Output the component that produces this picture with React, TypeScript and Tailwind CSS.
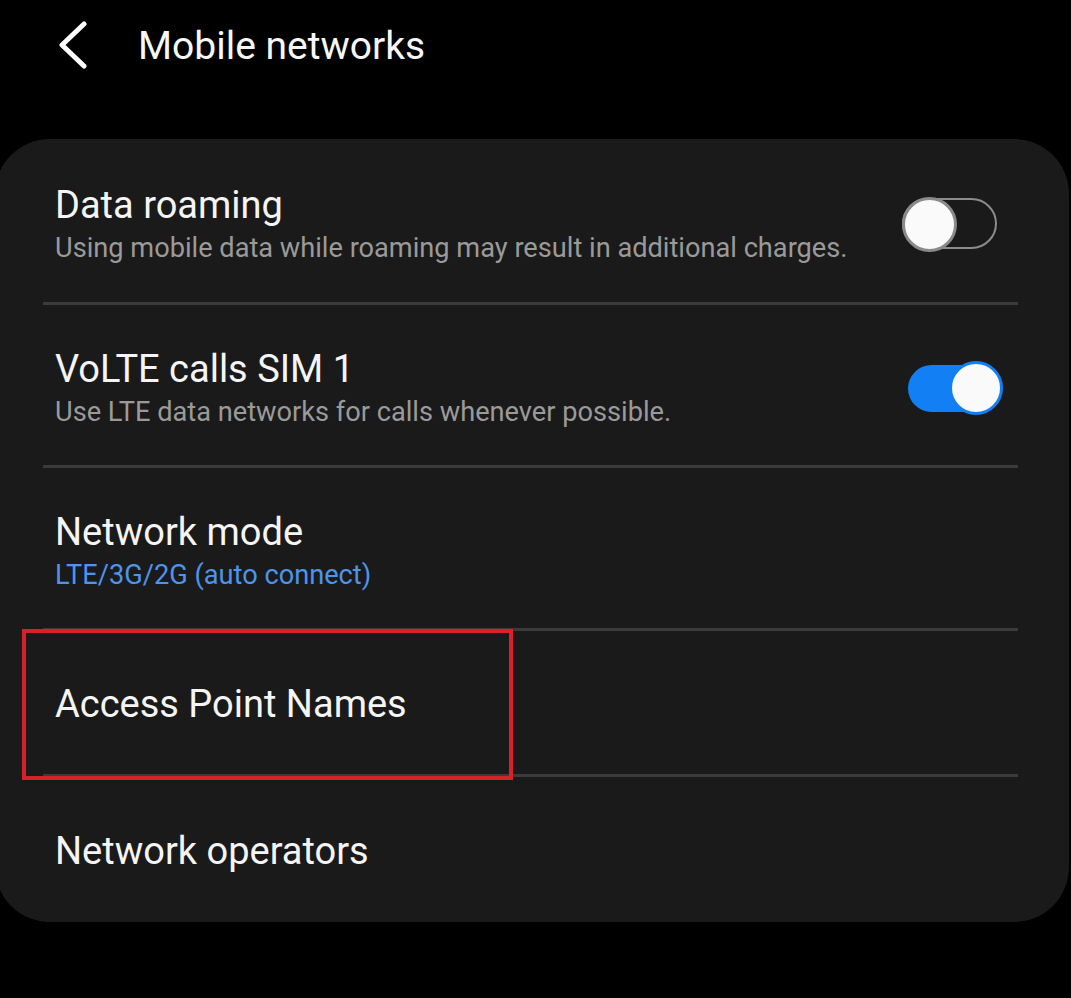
import React from 'react'

const font = { fontFamily: 'Roboto, "Noto Sans", sans-serif' }

function BackIcon() {
  return (
    <svg width="40" height="50" viewBox="0 0 40 50" className="shrink-0">
      <polyline
        points="26,3 4,24 26,45"
        fill="none"
        stroke="#ffffff"
        strokeWidth="5"
        strokeLinecap="round"
        strokeLinejoin="round"
      />
    </svg>
  )
}

function Toggle({ on }: { on: boolean }) {
  if (on) {
    return (
      <div className="relative w-[96px] h-[54px] flex items-center shrink-0">
        <div className="w-[92px] h-[47px] rounded-full bg-[#127ff4] ml-[1px]" />
        <div className="absolute right-0 top-0 w-[54px] h-[54px] rounded-full bg-[#fafafa] border-[3px] border-[#127ff4]" />
      </div>
    )
  }
  return (
    <div className="relative w-[96px] h-[54px] flex items-center shrink-0 mr-[5px]">
      <div className="w-[95px] h-[51px] rounded-full border-[2.5px] border-[#8c8c8c]" />
      <div className="absolute left-0 top-0 w-[55px] h-[55px] rounded-full bg-[#fafafa] border-[3px] border-[#8a8a8a]" />
    </div>
  )
}

function Divider() {
  return <div className="h-[3px] bg-[#3b3b3b] ml-[48px] mr-[51px]" />
}

function Row({
  title,
  sub,
  subBlue,
  toggle,
  height,
  pt,
}: {
  title: string
  sub?: string
  subBlue?: boolean
  toggle?: boolean
  height: string
  pt?: string
}) {
  return (
    <div className={`flex items-center pl-[60px] pr-[66px] ${height} ${pt ?? ''}`}>
      <div className="flex-1 flex flex-col">
        <span className="text-[38px] leading-[48px] text-[#f5f5f5]">{title}</span>
        {sub && (
          <span
            className={`text-[27.2px] leading-[38px] ${subBlue ? 'text-[#4d94ea]' : 'text-[#9a9a9a]'}`}
          >
            {sub}
          </span>
        )}
      </div>
      {toggle !== undefined && <Toggle on={toggle} />}
    </div>
  )
}

export default function App() {
  return (
    <div className="w-[1071px] h-[998px] bg-black overflow-hidden" style={font}>
      {/* Header */}
      <div className="flex items-center h-[92px] pl-[58px] gap-[40px]">
        <BackIcon />
        <span className="text-[39px] text-[#f7f7f7]">Mobile networks</span>
      </div>

      {/* Card */}
      <div className="mt-[47px] -ml-[5px] w-[1074px] h-[783px] bg-[#1a1a1a] rounded-[55px] flex flex-col">
        <Row
          title="Data roaming"
          sub="Using mobile data while roaming may result in additional charges."
          toggle={false}
          height="h-[163px]"
          pt="pt-[6px]"
        />
        <Divider />
        <Row
          title="VoLTE calls SIM 1"
          sub="Use LTE data networks for calls whenever possible."
          toggle={true}
          height="h-[160px]"
          pt="pt-[6px]"
        />
        <Divider />
        <Row
          title="Network mode"
          sub="LTE/3G/2G (auto connect)"
          subBlue
          height="h-[160px]"
          pt="pt-[6px]"
        />
        <Divider />
        <div className="relative">
          <Row title="Access Point Names" height="h-[143px]" pt="pt-[2px]" />
          <div className="absolute left-[27px] top-[-2px] w-[491px] h-[151px] border-[4px] border-[#d7222c]" />
        </div>
        <Divider />
        <Row title="Network operators" height="h-[144px]" pt="pt-[4px]" />
      </div>
    </div>
  )
}
